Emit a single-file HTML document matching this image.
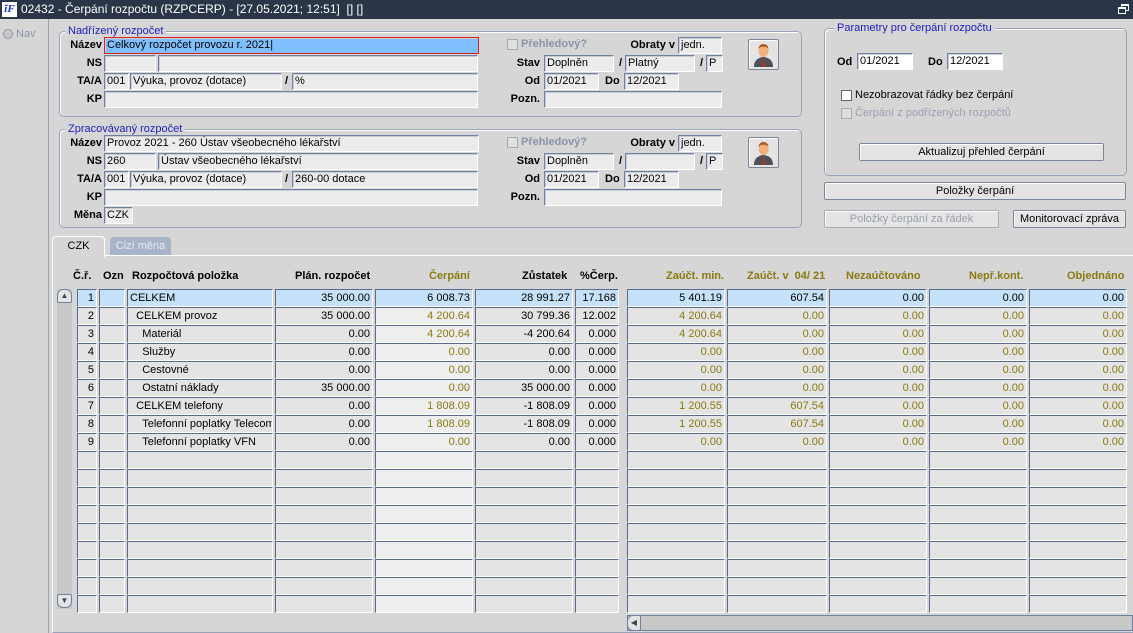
<!DOCTYPE html>
<html><head><meta charset="utf-8"><style>
*{box-sizing:border-box;margin:0;padding:0}
body{width:1133px;height:633px;overflow:hidden;background:#d6d6d6;font-family:"Liberation Sans",Arial,sans-serif;font-size:11px;color:#000;position:relative}
.a{position:absolute}
.title{left:0;top:0;width:1133px;height:19px;background:#2b3548;color:#fff;font-size:12px;line-height:19px}
.f{position:absolute;height:17px;background:#ececec;border-top:1px solid #7080a0;border-left:1px solid #7080a0;border-right:1px solid #fff;border-bottom:1px solid #fff;box-shadow:inset 1px 1px 0 #c8ccd4;padding-left:2px;line-height:15px;white-space:nowrap;overflow:hidden;font-size:11px}
.w{background:#fff}
.l{position:absolute;font-weight:bold;text-align:right;line-height:17px;font-size:11px}
.g{position:absolute;border:1px solid #9aa4b8;border-radius:5px;box-shadow:1px 1px 0 #fff inset}
.gt{position:absolute;background:#d6d6d6;color:#2020c0;padding:0 3px;font-size:11px;line-height:12px}
.btn{position:absolute;border:1px solid #7c869a;border-radius:2px;background:#e4e4e4;box-shadow:inset 1px 1px 0 #fff;text-align:center;line-height:16px;font-size:11px}
.cb{position:absolute;width:11px;height:11px;border:1px solid #666;background:#fff}
table{position:absolute;border-collapse:separate;border-spacing:2px 0;table-layout:fixed}
td{height:18px;border-top:1px solid #5a6a8c;border-left:1px solid #5a6a8c;border-right:1px solid #fff;border-bottom:1px solid #fff;background:#e4e4e4;padding:0 2px;text-align:right;white-space:nowrap;overflow:hidden;font-size:11px;line-height:15px}
td.t{text-align:left}
td.c{background:#eeeeee;color:#8a7a10}
td.o{color:#8a7a10}
tr.s td{background:#c6e2fa;color:#000}
.h{position:absolute;top:270px;font-weight:bold;font-size:11px}
.ho{color:#8a7a10}
</style></head><body>
<div class="a title"><span class="a" style="left:2px;top:2px;width:15px;height:15px;background:#fff;color:#1030c0;font:italic bold 11px/15px 'Liberation Serif',serif;text-align:center">ĭF</span><span class="a" style="left:21px;top:0">02432 - Čerpání rozpočtu (RZPCERP) - [27.05.2021; 12:51]&nbsp; [] []</span>
<span class="a" style="left:1121px;top:4px;width:8px;height:7px;border:1px solid #fff;border-top-width:2px"></span>
<span class="a" style="left:1118px;top:7px;width:8px;height:7px;border:1px solid #fff;border-top-width:2px;background:#2b3548"></span></div>
<!-- left nav -->
<div class="a" style="left:48px;top:19px;width:1px;height:614px;background:#9aa4b8"></div>
<div class="a" style="left:3px;top:29px;width:10px;height:10px;border-radius:50%;border:1px solid #8a94a8;background:#c8c8c8"></div>
<div class="a" style="left:16px;top:28px;color:#8a94a8">Nav</div>

<!-- group 1 -->
<div class="g" style="left:59px;top:31px;width:743px;height:86px"></div>
<div class="gt" style="left:65px;top:25px">Nadřízený rozpočet</div>
<div class="l" style="left:60px;top:37px;width:42px">Název</div>
<div class="f" style="left:104px;top:37px;width:375px;background:#80bfff;border:1px solid #e02020">Celkový rozpočet provozu r. 2021|</div>
<div class="l" style="left:60px;top:55px;width:42px">NS</div>
<div class="f" style="left:104px;top:55px;width:52px"></div><div class="f" style="left:158px;top:55px;width:320px"></div>
<div class="l" style="left:60px;top:73px;width:42px">TA/A</div>
<div class="f" style="left:104px;top:73px;width:25px">001</div><div class="f" style="left:130px;top:73px;width:152px">Výuka, provoz (dotace)</div>
<div class="l" style="left:285px;top:73px">/</div><div class="f" style="left:292px;top:73px;width:186px">%</div>
<div class="l" style="left:60px;top:91px;width:42px">KP</div>
<div class="f" style="left:104px;top:91px;width:374px"></div>
<div class="cb" style="left:507px;top:39px;background:#e0e0e0;border-color:#aaa"></div><div class="a" style="left:521px;top:38px;color:#8a94a8;font-weight:bold">Přehledový?</div>
<div class="l" style="left:600px;top:37px;width:75px">Obraty v</div><div class="f" style="left:678px;top:37px;width:44px">jedn.</div>
<div class="l" style="left:500px;top:55px;width:40px">Stav</div><div class="f" style="left:544px;top:55px;width:70px">Doplněn</div>
<div class="l" style="left:619px;top:55px">/</div><div class="f" style="left:625px;top:55px;width:70px">Platný</div>
<div class="l" style="left:700px;top:55px">/</div><div class="f" style="left:706px;top:55px;width:17px">P</div>
<div class="l" style="left:500px;top:73px;width:40px">Od</div><div class="f" style="left:544px;top:73px;width:55px">01/2021</div>
<div class="l" style="left:605px;top:73px">Do</div><div class="f" style="left:624px;top:73px;width:55px">12/2021</div>
<div class="l" style="left:500px;top:91px;width:40px">Pozn.</div><div class="f" style="left:544px;top:91px;width:178px"></div>
<div class="btn" style="left:748px;top:39px;width:31px;height:31px"><svg width="29" height="29" viewBox="0 0 29 29"><path d="M5 27 Q5 18 14.5 17 Q24 18 24 27Z" fill="#505058"/><path d="M14.5 17 L13 27 H16Z" fill="#c03020"/><ellipse cx="14.5" cy="11" rx="5" ry="6" fill="#f0b080"/><path d="M9.5 9 Q10 4 14.5 4 Q19 4 19.5 9 Q17 6 14.5 7 Q12 6 9.5 9Z" fill="#b05a20"/></svg></div>

<!-- group 2 -->
<div class="g" style="left:59px;top:129px;width:743px;height:99px"></div>
<div class="gt" style="left:65px;top:123px">Zpracovávaný rozpočet</div>
<div class="l" style="left:60px;top:135px;width:42px">Název</div>
<div class="f" style="left:104px;top:135px;width:375px">Provoz 2021 - 260 Ústav všeobecného lékařství</div>
<div class="l" style="left:60px;top:153px;width:42px">NS</div>
<div class="f" style="left:104px;top:153px;width:52px">260</div><div class="f" style="left:158px;top:153px;width:320px">Ústav všeobecného lékařství</div>
<div class="l" style="left:60px;top:171px;width:42px">TA/A</div>
<div class="f" style="left:104px;top:171px;width:25px">001</div><div class="f" style="left:130px;top:171px;width:152px">Výuka, provoz (dotace)</div>
<div class="l" style="left:285px;top:171px">/</div><div class="f" style="left:292px;top:171px;width:186px">260-00 dotace</div>
<div class="l" style="left:60px;top:189px;width:42px">KP</div>
<div class="f" style="left:104px;top:189px;width:374px"></div>
<div class="l" style="left:60px;top:207px;width:42px">Měna</div>
<div class="f" style="left:104px;top:207px;width:29px">CZK</div>
<div class="cb" style="left:507px;top:137px;background:#e0e0e0;border-color:#aaa"></div><div class="a" style="left:521px;top:136px;color:#8a94a8;font-weight:bold">Přehledový?</div>
<div class="l" style="left:600px;top:135px;width:75px">Obraty v</div><div class="f" style="left:678px;top:135px;width:44px">jedn.</div>
<div class="l" style="left:500px;top:153px;width:40px">Stav</div><div class="f" style="left:544px;top:153px;width:70px">Doplněn</div>
<div class="l" style="left:619px;top:153px">/</div><div class="f" style="left:625px;top:153px;width:70px"></div>
<div class="l" style="left:700px;top:153px">/</div><div class="f" style="left:706px;top:153px;width:17px">P</div>
<div class="l" style="left:500px;top:171px;width:40px">Od</div><div class="f" style="left:544px;top:171px;width:55px">01/2021</div>
<div class="l" style="left:605px;top:171px">Do</div><div class="f" style="left:624px;top:171px;width:55px">12/2021</div>
<div class="l" style="left:500px;top:189px;width:40px">Pozn.</div><div class="f" style="left:544px;top:189px;width:178px"></div>
<div class="btn" style="left:748px;top:137px;width:31px;height:31px"><svg width="29" height="29" viewBox="0 0 29 29"><path d="M5 27 Q5 18 14.5 17 Q24 18 24 27Z" fill="#505058"/><path d="M14.5 17 L13 27 H16Z" fill="#c03020"/><ellipse cx="14.5" cy="11" rx="5" ry="6" fill="#f0b080"/><path d="M9.5 9 Q10 4 14.5 4 Q19 4 19.5 9 Q17 6 14.5 7 Q12 6 9.5 9Z" fill="#b05a20"/></svg></div>

<!-- right panel -->
<div class="g" style="left:824px;top:28px;width:303px;height:148px"></div>
<div class="gt" style="left:834px;top:22px">Parametry pro čerpání rozpočtu</div>
<div class="l" style="left:837px;top:54px">Od</div><div class="f w" style="left:857px;top:53px;width:56px">01/2021</div>
<div class="l" style="left:928px;top:54px">Do</div><div class="f w" style="left:947px;top:53px;width:56px">12/2021</div>
<div class="cb" style="left:841px;top:90px"></div><div class="a" style="left:855px;top:89px">Nezobrazovat řádky bez čerpání</div>
<div class="cb" style="left:841px;top:108px;background:#ddd;border-color:#aaa"></div><div class="a" style="left:855px;top:107px;color:#9aa0b0">Čerpání z podřízených rozpočtů</div>
<div class="btn" style="left:859px;top:143px;width:245px;height:18px">Aktualizuj přehled čerpání</div>
<div class="btn" style="left:824px;top:182px;width:302px;height:18px">Položky čerpání</div>
<div class="btn" style="left:824px;top:210px;width:175px;height:18px;color:#9aa0b0;border-color:#aab">Položky čerpání za řádek</div>
<div class="btn" style="left:1013px;top:210px;width:113px;height:18px">Monitorovací zpráva</div>

<!-- tabs -->
<div class="a" style="left:52px;top:255px;width:1081px;height:378px;border-left:1px solid #fff;border-top:1px solid #fff;border-bottom:1px solid #9aa4b8"></div>
<div class="a" style="left:52px;top:236px;width:53px;height:21px;background:#d6d6d6;border:1px solid #fff;border-bottom:none;border-radius:4px 4px 0 0;text-align:center;line-height:19px">CZK</div>
<div class="a" style="left:110px;top:237px;width:61px;height:18px;background:#a8b4c8;border-radius:4px 4px 0 0;color:#e8ecf4;text-align:center;line-height:18px">Cizí měna</div>

<!-- headers -->
<div class="h" style="left:73px">Č.ř.</div>
<div class="h" style="left:103px">Ozn</div>
<div class="h" style="left:132px">Rozpočtová položka</div>
<div class="h" style="left:295px">Plán. rozpočet</div>
<div class="h ho" style="left:429px">Čerpání</div>
<div class="h" style="left:522px">Zůstatek</div>
<div class="h" style="left:580px">%Čerp.</div>
<div class="h ho" style="left:666px">Zaúčt. min.</div>
<div class="h ho" style="left:747px">Zaúčt. v &nbsp;04/ 21</div>
<div class="h ho" style="left:846px">Nezaúčtováno</div>
<div class="h ho" style="left:969px">Nepř.kont.</div>
<div class="h ho" style="left:1067px">Objednáno</div>

<!-- vscroll -->
<div class="a" style="left:57px;top:289px;width:15px;height:320px;background:#c8c8c8"></div>
<div class="a" style="left:57px;top:289px;width:15px;height:14px;background:#e4e4e4;border:1px solid #7080a0;border-radius:6px 6px 2px 2px;font-size:8px;text-align:center;line-height:12px;color:#445">▲</div>
<div class="a" style="left:57px;top:594px;width:15px;height:14px;background:#e4e4e4;border:1px solid #7080a0;border-radius:2px 2px 6px 6px;font-size:8px;text-align:center;line-height:12px;color:#445">▼</div>
<!-- hscroll -->
<div class="a" style="left:627px;top:615px;width:506px;height:16px;background:#c8c8c8;border:1px solid #7080a0"></div>
<div class="a" style="left:627px;top:615px;width:14px;height:16px;background:#e4e4e4;border:1px solid #7080a0;border-radius:6px 2px 2px 6px;font-size:8px;line-height:14px;text-align:center;color:#445">◀</div>

<table style="left:75px;top:289px;width:546px">
<colgroup><col style="width:20px"><col style="width:26px"><col style="width:146px"><col style="width:98px"><col style="width:98px"><col style="width:98px"><col style="width:44px"></colgroup>
<tr class="s"><td>1</td><td></td><td class="t">CELKEM</td><td>35 000.00</td><td class="c">6 008.73</td><td>28 991.27</td><td>17.168</td></tr>
<tr><td>2</td><td></td><td class="t">&nbsp;&nbsp;CELKEM provoz</td><td>35 000.00</td><td class="c">4 200.64</td><td>30 799.36</td><td>12.002</td></tr>
<tr><td>3</td><td></td><td class="t">&nbsp;&nbsp;&nbsp;&nbsp;Materiál</td><td>0.00</td><td class="c">4 200.64</td><td>-4 200.64</td><td>0.000</td></tr>
<tr><td>4</td><td></td><td class="t">&nbsp;&nbsp;&nbsp;&nbsp;Služby</td><td>0.00</td><td class="c">0.00</td><td>0.00</td><td>0.000</td></tr>
<tr><td>5</td><td></td><td class="t">&nbsp;&nbsp;&nbsp;&nbsp;Cestovné</td><td>0.00</td><td class="c">0.00</td><td>0.00</td><td>0.000</td></tr>
<tr><td>6</td><td></td><td class="t">&nbsp;&nbsp;&nbsp;&nbsp;Ostatní náklady</td><td>35 000.00</td><td class="c">0.00</td><td>35 000.00</td><td>0.000</td></tr>
<tr><td>7</td><td></td><td class="t">&nbsp;&nbsp;CELKEM telefony</td><td>0.00</td><td class="c">1 808.09</td><td>-1 808.09</td><td>0.000</td></tr>
<tr><td>8</td><td></td><td class="t">&nbsp;&nbsp;&nbsp;&nbsp;Telefonní poplatky Telecom</td><td>0.00</td><td class="c">1 808.09</td><td>-1 808.09</td><td>0.000</td></tr>
<tr><td>9</td><td></td><td class="t">&nbsp;&nbsp;&nbsp;&nbsp;Telefonní poplatky VFN</td><td>0.00</td><td class="c">0.00</td><td>0.00</td><td>0.000</td></tr>
<tr><td></td><td></td><td></td><td></td><td class="c"></td><td></td><td></td></tr>
<tr><td></td><td></td><td></td><td></td><td class="c"></td><td></td><td></td></tr>
<tr><td></td><td></td><td></td><td></td><td class="c"></td><td></td><td></td></tr>
<tr><td></td><td></td><td></td><td></td><td class="c"></td><td></td><td></td></tr>
<tr><td></td><td></td><td></td><td></td><td class="c"></td><td></td><td></td></tr>
<tr><td></td><td></td><td></td><td></td><td class="c"></td><td></td><td></td></tr>
<tr><td></td><td></td><td></td><td></td><td class="c"></td><td></td><td></td></tr>
<tr><td></td><td></td><td></td><td></td><td class="c"></td><td></td><td></td></tr>
<tr><td></td><td></td><td></td><td></td><td class="c"></td><td></td><td></td></tr>
</table>

<table style="left:625px;top:289px;width:504px">
<colgroup><col style="width:98px"><col style="width:100px"><col style="width:98px"><col style="width:98px"><col style="width:98px"></colgroup>
<tr class="s"><td>5 401.19</td><td>607.54</td><td>0.00</td><td>0.00</td><td>0.00</td></tr>
<tr><td class="o">4 200.64</td><td class="o">0.00</td><td class="o">0.00</td><td class="o">0.00</td><td class="o">0.00</td></tr>
<tr><td class="o">4 200.64</td><td class="o">0.00</td><td class="o">0.00</td><td class="o">0.00</td><td class="o">0.00</td></tr>
<tr><td class="o">0.00</td><td class="o">0.00</td><td class="o">0.00</td><td class="o">0.00</td><td class="o">0.00</td></tr>
<tr><td class="o">0.00</td><td class="o">0.00</td><td class="o">0.00</td><td class="o">0.00</td><td class="o">0.00</td></tr>
<tr><td class="o">0.00</td><td class="o">0.00</td><td class="o">0.00</td><td class="o">0.00</td><td class="o">0.00</td></tr>
<tr><td class="o">1 200.55</td><td class="o">607.54</td><td class="o">0.00</td><td class="o">0.00</td><td class="o">0.00</td></tr>
<tr><td class="o">1 200.55</td><td class="o">607.54</td><td class="o">0.00</td><td class="o">0.00</td><td class="o">0.00</td></tr>
<tr><td class="o">0.00</td><td class="o">0.00</td><td class="o">0.00</td><td class="o">0.00</td><td class="o">0.00</td></tr>
<tr><td></td><td></td><td></td><td></td><td></td></tr>
<tr><td></td><td></td><td></td><td></td><td></td></tr>
<tr><td></td><td></td><td></td><td></td><td></td></tr>
<tr><td></td><td></td><td></td><td></td><td></td></tr>
<tr><td></td><td></td><td></td><td></td><td></td></tr>
<tr><td></td><td></td><td></td><td></td><td></td></tr>
<tr><td></td><td></td><td></td><td></td><td></td></tr>
<tr><td></td><td></td><td></td><td></td><td></td></tr>
<tr><td></td><td></td><td></td><td></td><td></td></tr>
</table>
</body></html>
